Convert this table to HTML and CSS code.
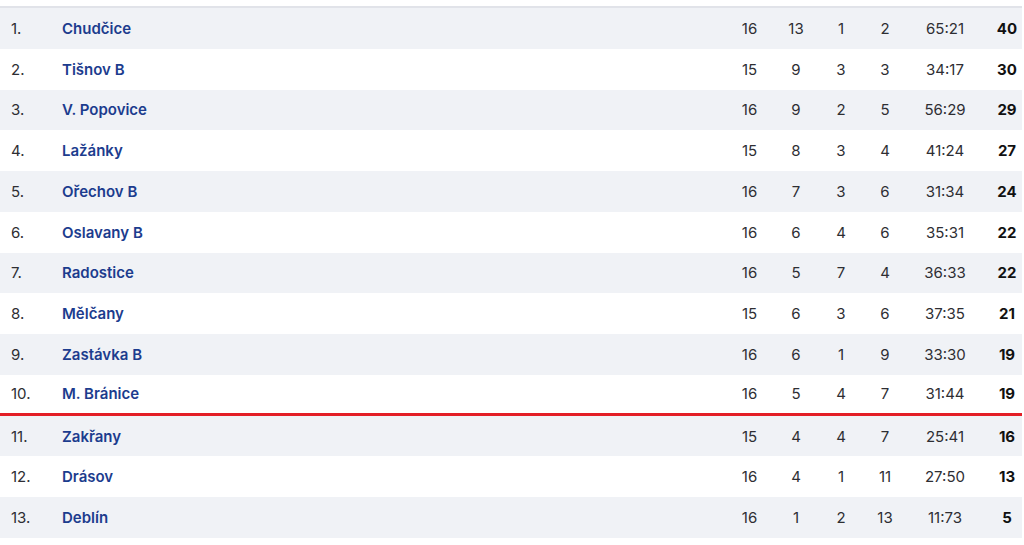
FILE: index.html
```html
<!DOCTYPE html>
<html lang="cs">
<head>
  <meta charset="utf-8" />
  <meta name="viewport" content="width=device-width,initial-scale=1" />
  <title>Tabulka</title>
  <link rel="stylesheet" href="styles.css">
</head>
<body>
  <div class="table">
    <div class="row"><span class="rank">1.</span><span class="team">Chudčice</span><span>16</span><span>13</span><span>1</span><span>2</span><span>65:21</span><span class="pts">40</span></div>
    <div class="row"><span class="rank">2.</span><span class="team">Tišnov B</span><span>15</span><span>9</span><span>3</span><span>3</span><span>34:17</span><span class="pts">30</span></div>
    <div class="row"><span class="rank">3.</span><span class="team">V. Popovice</span><span>16</span><span>9</span><span>2</span><span>5</span><span>56:29</span><span class="pts">29</span></div>
    <div class="row"><span class="rank">4.</span><span class="team">Lažánky</span><span>15</span><span>8</span><span>3</span><span>4</span><span>41:24</span><span class="pts">27</span></div>
    <div class="row"><span class="rank">5.</span><span class="team">Ořechov B</span><span>16</span><span>7</span><span>3</span><span>6</span><span>31:34</span><span class="pts">24</span></div>
    <div class="row"><span class="rank">6.</span><span class="team">Oslavany B</span><span>16</span><span>6</span><span>4</span><span>6</span><span>35:31</span><span class="pts">22</span></div>
    <div class="row"><span class="rank">7.</span><span class="team">Radostice</span><span>16</span><span>5</span><span>7</span><span>4</span><span>36:33</span><span class="pts">22</span></div>
    <div class="row"><span class="rank">8.</span><span class="team">Mělčany</span><span>15</span><span>6</span><span>3</span><span>6</span><span>37:35</span><span class="pts">21</span></div>
    <div class="row"><span class="rank">9.</span><span class="team">Zastávka B</span><span>16</span><span>6</span><span>1</span><span>9</span><span>33:30</span><span class="pts">19</span></div>
    <div class="row cut"><span class="rank">10.</span><span class="team">M. Bránice</span><span>16</span><span>5</span><span>4</span><span>7</span><span>31:44</span><span class="pts">19</span></div>
    <div class="row"><span class="rank">11.</span><span class="team">Zakřany</span><span>15</span><span>4</span><span>4</span><span>7</span><span>25:41</span><span class="pts">16</span></div>
    <div class="row"><span class="rank">12.</span><span class="team">Drásov</span><span>16</span><span>4</span><span>1</span><span>11</span><span>27:50</span><span class="pts">13</span></div>
    <div class="row"><span class="rank">13.</span><span class="team">Deblín</span><span>16</span><span>1</span><span>2</span><span>13</span><span>11:73</span><span class="pts">5</span></div>
  </div>
</body>
</html>
```

FILE: styles.css
```css
:root{
  --stripe:#f0f2f6; --blue:#1c3c8e; --text:#2e2e33; --red:#e31e26; --line:#e1e3e9;
}
*{box-sizing:border-box;margin:0;padding:0}
body{background:#fff;font-family:Inter,'Noto Sans',sans-serif;font-size:15px;color:var(--text)}
.table{width:1022px;margin-top:6px;border-top:2px solid var(--line)}
.row{display:grid;grid-template-columns:62px 1fr 47px 46px 44px 44px 76px 39px;align-items:center;height:40.77px;text-align:center}
.row:nth-child(odd){background:var(--stripe)}
.row.cut{border-bottom:3px solid var(--red);height:40.77px}
.rank{text-align:left;padding-left:11px}
.team{text-align:left;color:var(--blue);font-weight:600}
.pts{font-weight:700;color:#111;padding-left:9px}
```
